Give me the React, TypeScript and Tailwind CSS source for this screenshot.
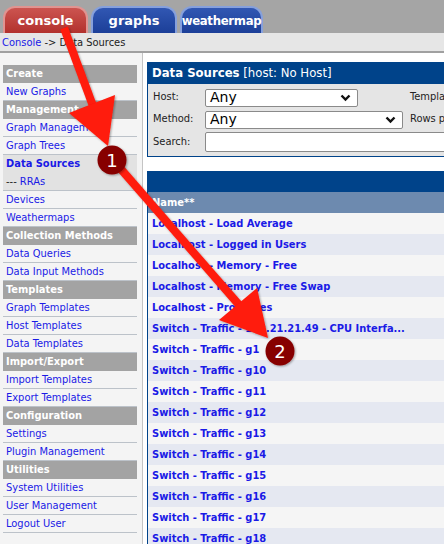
import React from 'react';

type NavItem = { label: string; header?: boolean; active?: boolean; sub?: boolean };

const nav: NavItem[] = [
  { label: 'Create', header: true },
  { label: 'New Graphs' },
  { label: 'Management', header: true },
  { label: 'Graph Management' },
  { label: 'Graph Trees' },
  { label: 'Data Sources', active: true },
  { label: 'RRAs', sub: true },
  { label: 'Devices' },
  { label: 'Weathermaps' },
  { label: 'Collection Methods', header: true },
  { label: 'Data Queries' },
  { label: 'Data Input Methods' },
  { label: 'Templates', header: true },
  { label: 'Graph Templates' },
  { label: 'Host Templates' },
  { label: 'Data Templates' },
  { label: 'Import/Export', header: true },
  { label: 'Import Templates' },
  { label: 'Export Templates' },
  { label: 'Configuration', header: true },
  { label: 'Settings' },
  { label: 'Plugin Management' },
  { label: 'Utilities', header: true },
  { label: 'System Utilities' },
  { label: 'User Management' },
  { label: 'Logout User' },
];

const sources = [
  'Localhost - Load Average',
  'Localhost - Logged in Users',
  'Localhost - Memory - Free',
  'Localhost - Memory - Free Swap',
  'Localhost - Processes',
  'Switch - Traffic - 172.21.21.49 - CPU Interfa...',
  'Switch - Traffic - g1',
  'Switch - Traffic - g10',
  'Switch - Traffic - g11',
  'Switch - Traffic - g12',
  'Switch - Traffic - g13',
  'Switch - Traffic - g14',
  'Switch - Traffic - g15',
  'Switch - Traffic - g16',
  'Switch - Traffic - g17',
  'Switch - Traffic - g18',
];

const Chevron = () => (
  <svg width="11" height="8" viewBox="0 0 11 8" className="shrink-0">
    <path d="M1.5 1.5 L5.5 5.5 L9.5 1.5" fill="none" stroke="#111" strokeWidth="2.4" />
  </svg>
);

const Tab = ({ label, w, red, narrow }: { label: string; w: string; red?: boolean; narrow?: boolean }) => (
  <div
    className={`${w} h-[27px] rounded-t-[12px] border-t-2 border-x-2 flex items-center justify-center text-white font-bold text-[13px] ${
      narrow ? "font-['DejaVu_Sans_Condensed','DejaVu_Sans',sans-serif] tracking-[-0.3px]" : "font-['DejaVu_Sans',Verdana,sans-serif]"
    } ${
      red
        ? 'bg-gradient-to-b from-[#cc5450] to-[#b2312d] border-[#e09491]'
        : 'bg-gradient-to-b from-[#3157b3] to-[#1c3f98] border-[#86a0dc]'
    }`}
  >
    {label}
  </div>
);

export default function App() {
  return (
    <div className="relative w-[444px] h-[544px] overflow-hidden bg-white font-['DejaVu_Sans_Condensed','DejaVu_Sans',Verdana,sans-serif] text-[11px] text-[#222]">
      {/* tabs */}
      <div className="h-[33px] bg-[#a5a5a5] flex items-end gap-[3px] pl-[3px]">
        <Tab label="console" w="w-[85px]" red />
        <Tab label="graphs" w="w-[86px]" />
        <Tab label="weathermap" w="w-[83px]" narrow />
      </div>

      {/* breadcrumb */}
      <div className="h-[20px] bg-[#e6e6e6] pl-[2px] leading-[19px] whitespace-nowrap border-b-2 border-[#a0a0a0]">
        <span className="text-[#1a1ae6]">Console</span> -&gt; Data Sources
      </div>

      <div className="flex">
        {/* sidebar */}
        <div className="w-[143px] shrink-0 bg-[#f4f4f4] border-r border-[#c4c4c4] pt-[12px] pl-[3px] pr-[5px] min-h-[500px]">
          {nav.map((n) =>
            n.header ? (
              <div key={n.label} className="h-[18px] bg-[#a3a3a3] text-white font-bold pl-[3px] leading-[18px] whitespace-nowrap overflow-hidden">
                {n.label}
              </div>
            ) : (
              <div
                key={n.label}
                className={`h-[18px] pl-[3px] leading-[17px] whitespace-nowrap overflow-hidden ${
                  n.active || n.sub ? 'bg-[#e2e2e2]' : ''
                } ${n.active ? '' : 'border-b border-[#bcc2c9]'}`}
              >
                {n.sub && <span className="text-[#222]">--- </span>}
                <span className={`text-[#1a1ae6] ${n.active ? 'font-bold' : ''}`}>{n.label}</span>
              </div>
            )
          )}
        </div>

        {/* main */}
        <div className="w-[600px] shrink-0 pl-[4px] pt-[9px]">
          <div className="h-[22px] bg-[#00438a] text-white text-[13px] pl-[5px] leading-[22px] whitespace-nowrap">
            <span className="font-bold">Data Sources</span> [host: No Host]
          </div>
          <div className="bg-[#e5e5e5] border-l border-b border-[#00438a] pl-[5px] pt-[4px] pb-[4px] flex flex-col gap-[3px]">
            <div className="flex items-center h-[19px]">
              <span className="w-[52px]">Host:</span>
              <div className="w-[205px]">
                <div className="w-[153px] h-[18px] bg-white border border-[#8a8a8a] rounded-[2px] flex items-center justify-between pl-[4px] pr-[6px] text-[14px] text-black font-['DejaVu_Sans',sans-serif]">
                  Any <Chevron />
                </div>
              </div>
              <span>Template:</span>
            </div>
            <div className="flex items-center h-[19px]">
              <span className="w-[52px]">Method:</span>
              <div className="w-[205px]">
                <div className="w-[198px] h-[18px] bg-white border border-[#8a8a8a] rounded-[2px] flex items-center justify-between pl-[4px] pr-[6px] text-[14px] text-black font-['DejaVu_Sans',sans-serif]">
                  Any <Chevron />
                </div>
              </div>
              <span>Rows per Page:</span>
            </div>
            <div className="flex items-center h-[20px]">
              <span className="w-[52px]">Search:</span>
              <div className="w-[300px] h-[20px] bg-white border border-[#8a8a8a] rounded-[2px]" />
            </div>
          </div>

          <div className="mt-[14px] border-l border-[#00438a]">
            <div className="h-[21px] bg-[#00438a]" />
            <div className="h-[21px] bg-[#6d8aaf] text-white font-bold pl-[4px] leading-[21px]">Name**</div>
            {sources.map((s, i) => (
              <div
                key={s}
                className={`h-[21px] pl-[4px] leading-[21px] font-bold text-[#1a1ae6] whitespace-nowrap ${
                  i % 2 === 0 ? 'bg-[#f5f5f5]' : 'bg-[#e5e8f1]'
                }`}
              >
                {s}
              </div>
            ))}
          </div>
        </div>
      </div>

      {/* annotation overlay */}
      <svg className="absolute inset-0 pointer-events-none" width="444" height="544" viewBox="0 0 444 544">
        <defs>
          <filter id="sh" x="-20%" y="-20%" width="140%" height="140%">
            <feDropShadow dx="1" dy="1" stdDeviation="1.2" floodColor="#000" floodOpacity="0.35" />
          </filter>
        </defs>
        <g fill="#ff1a0a" stroke="#ff1a0a" filter="url(#sh)">
          <line x1="64" y1="28" x2="93" y2="106" strokeWidth="8" />
          <polygon points="108,146 69,113 115,95" stroke="none" />
          <line x1="113" y1="160" x2="240" y2="306" strokeWidth="8" />
          <polygon points="268,338 219,320 257,288" stroke="none" />
        </g>
        <g filter="url(#sh)">
          <circle cx="112" cy="160" r="14.5" fill="#870000" />
          <circle cx="280" cy="351" r="14.5" fill="#870000" />
        </g>
        <text x="112" y="166.5" textAnchor="middle" fill="#fff" fontSize="18" fontFamily="'DejaVu Sans', sans-serif">1</text>
        <text x="280" y="357.5" textAnchor="middle" fill="#fff" fontSize="18" fontFamily="'DejaVu Sans', sans-serif">2</text>
      </svg>
    </div>
  );
}
